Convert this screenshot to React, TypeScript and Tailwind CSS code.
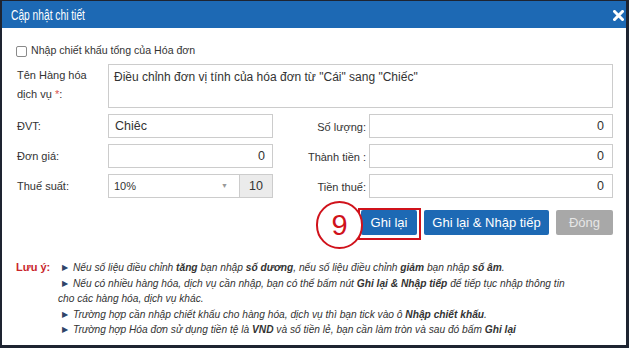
import React from "react";

const FONT = { fontFamily: '"Liberation Sans", Arial, sans-serif' };

function Bullet() {
  return <span className="mr-[5px] inline-block text-[8px] not-italic text-[#2f4468] align-[1px]">▶</span>;
}

function Label({ children, right }: { children: React.ReactNode; right?: boolean }) {
  return (
    <span className={`text-[11px] text-[#333] ${right ? "text-right" : ""}`}>{children}</span>
  );
}

export default function App() {
  return (
    <div
      style={FONT}
      className="w-[629px] h-[348px] overflow-hidden bg-white border-t border-l-2 border-r-[3px] border-b-[3px] border-[#1e2431] flex flex-col"
    >
      <div className="relative h-[27px] bg-[#1d69b4] flex items-center pl-[9px]">
        <span className="text-white text-[15.5px] origin-left scale-x-[0.66] inline-block whitespace-nowrap">
          Cập nhật chi tiết
        </span>
        <svg className="absolute right-[2px] top-[9px]" width="11" height="11" viewBox="0 0 11 11">
          <path d="M1.5 1.5 L9.5 9.5 M9.5 1.5 L1.5 9.5" stroke="white" strokeWidth="3" strokeLinecap="square" />
        </svg>
      </div>

      <div className="flex items-center mt-[17px] pl-[14px] h-[12px]">
        <span className="w-[11px] h-[11px] border border-[#8a8a8a] rounded-[2px] bg-white" />
        <span className="ml-[4px] text-[10.6px] text-[#333]">Nhập chiết khấu tổng của Hóa đơn</span>
      </div>

      <div className="flex mt-[7px] pl-[15px]">
        <div className="w-[91px] pt-[2px] text-[11px] leading-[19px] text-[#333]">
          Tên Hàng hóa
          <br />
          dịch vụ <span className="text-[#d9534f]">*</span>:
        </div>
        <div className="w-[505px] h-[44px] border border-[#cccccc] px-[5px] pt-[3px] text-[12px] text-[#333] whitespace-nowrap">
          Điều chỉnh đơn vị tính của hóa đơn từ "Cái" sang "Chiếc"
        </div>
      </div>

      <div className="grid grid-cols-[91px_165px_96px_244px] gap-y-[6px] mt-[6px] pl-[15px] items-center">
        <Label>ĐVT:</Label>
        <div className="h-[24px] border border-[#cccccc] px-[6px] flex items-center text-[12.5px] text-[#333]">Chiêc</div>
        <div className="text-right pr-[3px]"><Label right>Số lượng:</Label></div>
        <div className="h-[24px] border border-[#cccccc] px-[8px] flex items-center justify-end text-[12.5px] text-[#333]">0</div>

        <Label>Đơn giá:</Label>
        <div className="h-[24px] border border-[#cccccc] px-[7px] flex items-center justify-end text-[12.5px] text-[#333]">0</div>
        <div className="text-right pr-[3px]"><Label right>Thành tiền :</Label></div>
        <div className="h-[24px] border border-[#cccccc] px-[8px] flex items-center justify-end text-[12.5px] text-[#333]">0</div>

        <Label>Thuế suất:</Label>
        <div className="h-[24px] flex">
          <div className="w-[132px] border border-[#cccccc] pl-[5px] pr-[11px] flex items-center justify-between text-[11px] text-[#333]">
            <span>10%</span>
            <span className="text-[7px] text-[#999]">▼</span>
          </div>
          <div className="flex-1 border border-l-0 border-[#cccccc] bg-[#ebebeb] flex items-center justify-center text-[12.5px] text-[#333]">10</div>
        </div>
        <div className="text-right pr-[3px]"><Label right>Tiền thuế:</Label></div>
        <div className="h-[24px] border border-[#cccccc] px-[8px] flex items-center justify-end text-[12.5px] text-[#333]">0</div>
      </div>

      <div className="flex justify-end gap-[7px] mt-[12px] pr-[13px]">
        <div className="relative">
          <button className="h-[25px] w-[56px] bg-[#1d69b4] text-white text-[13px] rounded-[2px]">Ghi lại</button>
          <span className="absolute -left-[3px] -top-[2px] w-[63px] h-[32px] border-2 border-[#d0121b]" />
          <span className="absolute -left-[45px] -top-[9px] w-[47px] h-[48px] rounded-full border-2 border-[#d0121b] bg-white flex items-center justify-center text-[29px] leading-none text-[#d0121b]">
            9
          </span>
        </div>
        <button className="h-[25px] w-[125px] bg-[#1d69b4] text-white text-[13px] rounded-[2px]">Ghi lại &amp; Nhập tiếp</button>
        <button className="h-[25px] w-[57px] bg-[#a8a8a8] text-[#e6e6e6] text-[13px] rounded-[2px]">Đóng</button>
      </div>

      <div className="flex mt-[25px] pl-[14px] text-[10.2px] leading-[15.5px] text-[#333]">
        <span className="w-[42px] font-bold text-[#c9252b] shrink-0 text-[11px]">Lưu ý:</span>
        <div className="italic whitespace-nowrap">
          <div className="pl-[4px]">
            <Bullet />Nếu số liệu điều chỉnh <b>tăng</b> bạn nhập <b>số dương</b>, nếu số liệu điều chỉnh <b>giảm</b> bạn nhập <b>số âm</b>.
          </div>
          <div className="pl-[4px]">
            <Bullet />Nếu có nhiều hàng hóa, dịch vụ cần nhập, bạn có thể bấm nút <b>Ghi lại &amp; Nhập tiếp</b> để tiếp tục nhập thông tin
          </div>
          <div>cho các hàng hóa, dịch vụ khác.</div>
          <div className="pl-[4px]">
            <Bullet />Trường hợp cần nhập chiết khấu cho hàng hóa, dịch vụ thì bạn tick vào ô <b>Nhập chiết khấu</b>.
          </div>
          <div className="pl-[4px]">
            <Bullet />Trường hợp Hóa đơn sử dụng tiền tệ là <b>VND</b> và số tiền lẻ, bạn cần làm tròn và sau đó bấm <b>Ghi lại</b>
          </div>
        </div>
      </div>
    </div>
  );
}
